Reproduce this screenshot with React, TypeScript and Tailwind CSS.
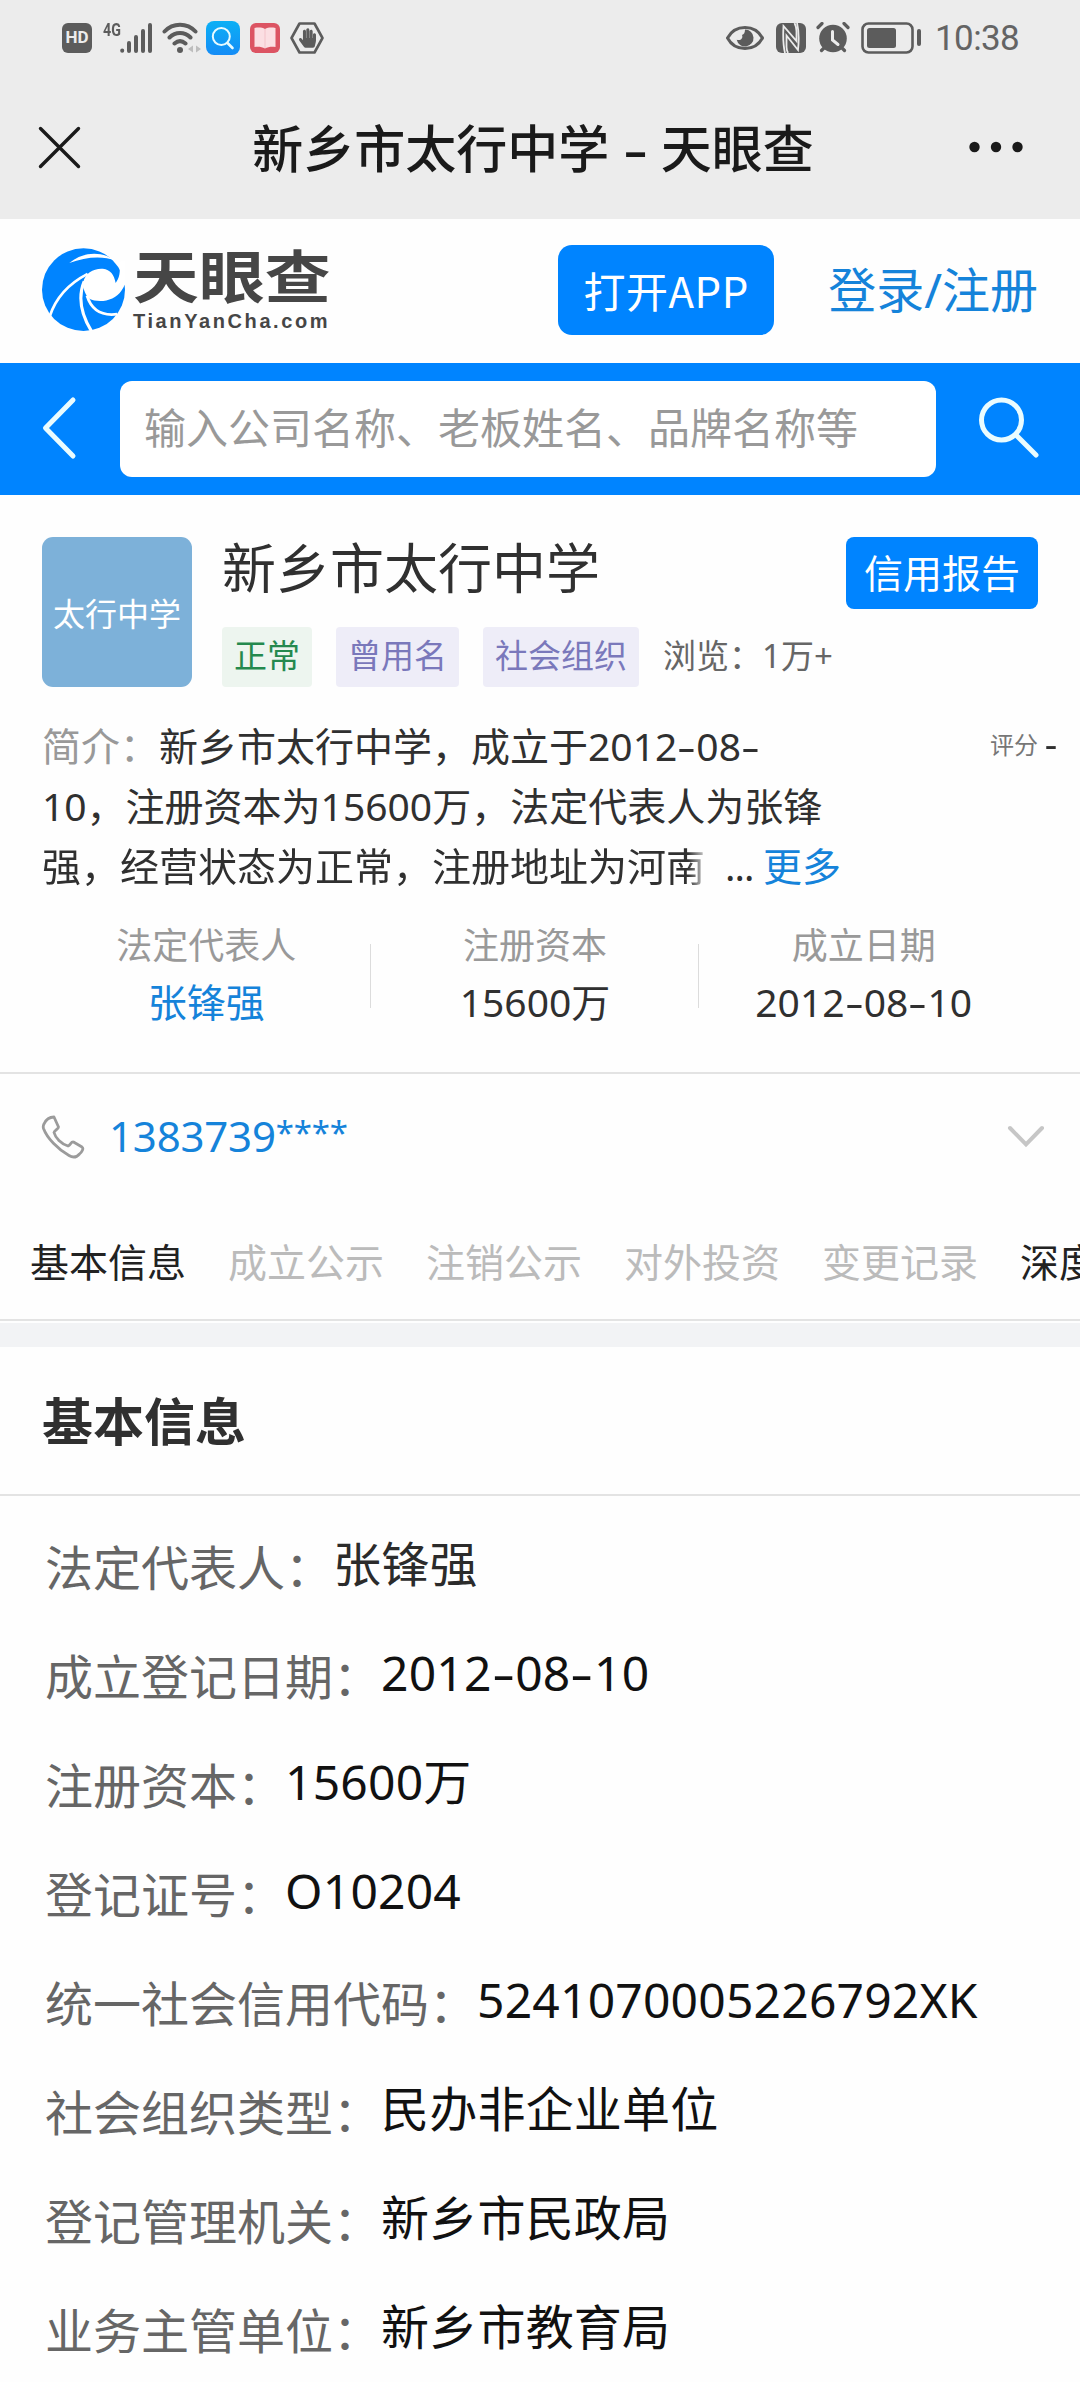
import { Fragment } from 'react'
import { FaHandPaper } from 'react-icons/fa'

const tabs = [
  { label: '基本信息', enabled: true },
  { label: '成立公示', enabled: false },
  { label: '注销公示', enabled: false },
  { label: '对外投资', enabled: false },
  { label: '变更记录', enabled: false },
  { label: '深度', enabled: true },
]

const rows = [
  { label: '法定代表人', value: '张锋强', color: 'text-[#2b2b2b]' },
  { label: '成立登记日期', value: '2012-08-10' },
  { label: '注册资本', value: '15600万' },
  { label: '登记证号', value: 'O10204' },
  { label: '统一社会信用代码', value: '5241070005226792XK' },
  { label: '社会组织类型', value: '民办非企业单位' },
  { label: '登记管理机关', value: '新乡市民政局' },
  { label: '业务主管单位', value: '新乡市教育局' },
]

// hyphens are drawn wide, the same advance as a digit minus a hair
function Dashed({ text }: { text: string }) {
  const parts = text.split('-')
  return (
    <>
      {parts.map((part, i) => (
        <Fragment key={i}>
          {i > 0 && <span className="inline-block w-[0.49em] scale-x-150 text-center">-</span>}
          {part}
        </Fragment>
      ))}
    </>
  )
}

function StatusBar() {
  return (
    <div className="flex h-[75px] items-center justify-between pr-[62px] pl-[62px] text-[#5c5c5c]">
      <div className="flex items-center">
        <div className="flex h-[30px] w-[30px] items-center justify-center rounded-[6px] bg-[#5c5c5c] font-['Roboto'] text-[17px] font-bold text-[#ececec]">
          HD
        </div>
        <span className="ml-[11px] -mt-[15px] w-[17px] origin-left scale-x-75 font-['Roboto'] text-[19px] leading-[16px] font-bold">4G</span>
        <svg className="h-[30px] w-[32px]" viewBox="0 0 32 30" stroke="currentColor" strokeWidth="4" strokeLinecap="round">
          <path d="M2.2 27.5v.3M9 20v8M16 14v14M23 8v20M30 2v26" />
        </svg>
        <svg className="ml-[10px] h-[32px] w-[40px]" viewBox="0 0 40 32" fill="none" stroke="currentColor" strokeWidth="4" strokeLinecap="round">
          <path d="M2.5 9.5C11 .5 25 .5 33.500 9.500M7.500 15.500c6-6 15-6 21 0M12.500 21.500c3.500-3 7.500-3 11 0" />
          <circle cx="18" cy="28" r="3" fill="currentColor" stroke="none" />
          <path d="M31 23.500v7l-5-3.500zM34 23.500v7l5-3.500z" fill="#bdbdbd" stroke="none" />
        </svg>
        <svg className="ml-[4px] h-[34px] w-[34px]" viewBox="0 0 34 34" fill="none">
          <defs>
            <linearGradient id="find" x1="0" y1="0" x2="0" y2="1">
              <stop offset="0" stopColor="#0bb0f5" />
              <stop offset="1" stopColor="#158cf6" />
            </linearGradient>
          </defs>
          <rect width="34" height="34" rx="8" fill="url(#find)" />
          <circle cx="15.300" cy="15.500" r="8.500" stroke="#e8fbff" strokeWidth="2" />
          <path d="M21.500 22l5 5" stroke="#e8fbff" strokeWidth="2.600" strokeLinecap="round" />
        </svg>
        <svg className="ml-[10px] h-[30px] w-[30px]" viewBox="0 0 30 30">
          <rect width="30" height="30" rx="6" fill="#dc5463" />
          <path d="M4.500 5c4-.8 7.500-.6 10.500 1 3-1.600 6.500-1.800 10.500-1v19c-4-.4-7.500-.2-10.500 1.500-3-1.700-6.500-1.900-10.500-1.500z" fill="#fbdfe3" />
          <path d="M15 6v19" stroke="#f3c3ca" strokeWidth="1" />
        </svg>
        <span className="relative ml-[10px] flex h-[32px] w-[34px] items-center justify-center">
          <svg className="absolute inset-0" viewBox="0 0 34 32" fill="none" stroke="currentColor" strokeWidth="2.600" strokeLinejoin="round">
            <path d="M9.500 1.500h15L32.500 16l-8 14.500h-15L1.500 16z" />
          </svg>
          <FaHandPaper className="h-[20px] w-[17px]" />
        </span>
      </div>

      <div className="flex items-center">
        <svg className="h-[26px] w-[38px]" viewBox="0 0 38 26" fill="none" stroke="currentColor" strokeWidth="3">
          <path d="M1.500 13C9-1 29-1 36.500 13 29 27 9 27 1.500 13z" />
          <path d="M19 4.500a8.500 8.500 0 1 1-8.300 10.200c3.500 1.500 6.800-1.200 5.300-4.700 2-.5 3-2.500 3-5.500z" fill="currentColor" stroke="none" />
        </svg>
        <svg className="ml-[12px] h-[30px] w-[30px]" viewBox="0 0 30 30" fill="none" stroke="#ececec" strokeWidth="1.800">
          <rect width="30" height="30" rx="6" fill="currentColor" stroke="none" />
          <path d="M9 30C7 22 7 12 7.500 3L20.500 18V8C20.500 4 19.500 2 18.500 0" />
          <path d="M21 0C23 8 23 18 22 27L10.500 12.500V24C10.500 26 11 28 12 30" />
        </svg>
        <svg className="ml-[10px] h-[31px] w-[34px]" viewBox="0 0 34 31" fill="none" stroke="currentColor" strokeLinecap="round">
          <circle cx="17" cy="16.500" r="13.800" fill="currentColor" stroke="none" />
          <path d="M2 5.500l4-4M32 5.500l-4-4M5.500 28.500l3-3M28.500 28.500l-3-3" strokeWidth="3.200" />
          <path d="M16.500 9.500v8.500l5.500 4.500" stroke="#ececec" strokeWidth="3" />
        </svg>
        <svg className="ml-[11px] h-[32px] w-[60px]" viewBox="0 0 60 32" fill="none" stroke="currentColor">
          <rect x="1.500" y="1.500" width="50" height="29" rx="6" strokeWidth="2.600" />
          <rect x="6" y="6" width="29" height="20" rx="2.500" fill="currentColor" stroke="none" />
          <path d="M58 9v13" strokeWidth="4" strokeLinecap="round" />
        </svg>
        <span className="ml-[14px] w-[83px] pt-[2px] font-['Roboto'] text-[35px] leading-none tracking-[-0.6px] whitespace-nowrap text-[#646464]">10:38</span>
      </div>
    </div>
  )
}

function Logo() {
  return (
    <div className="flex items-center gap-[8px]">
      <svg className="h-[83px] w-[83px]" viewBox="124 86 240 247" preserveAspectRatio="none" fill="none">
        <ellipse cx="244" cy="210" rx="120" ry="123" fill="#0084ff" />
        {/* iris opening and the gap it leaves on the right edge */}
        <path d="M243 190C248 160 275 146 300 148C322 151 332 165 337 190C342 182 349 172 349 150C349 142 348 136 345 128L380 120V190L363 196C352 222 335 236 310 242C292 246 272 243 262 238C250 226 242 208 243 190z" fill="#fff" />
        <path d="M203 131C240 98 295 92 336 124C300 108 250 112 203 131z" fill="#fff" />
        <path d="M256 163C205 190 165 230 146 290" stroke="#fff" strokeWidth="8" />
        <path d="M246 185C226 235 238 285 268 335" stroke="#fff" strokeWidth="9" />
        <path d="M254 228C265 265 290 290 342 283" stroke="#fff" strokeWidth="8" />
      </svg>
      <div className="-mt-[2px] flex w-[196px] flex-col items-start text-[#464646]">
        <span className="origin-left scale-x-[1.155] font-['Noto_Sans_CJK_SC',sans-serif] text-[57px] leading-[54px] font-bold">天眼查</span>
        <span className="mt-[11px] font-['Liberation_Sans',sans-serif] text-[20px] leading-[20px] font-bold tracking-[2.6px]">TianYanCha.com</span>
      </div>
    </div>
  )
}

function SearchBar() {
  return (
    <div className="flex h-[132px] items-center bg-[#0084ff] pb-[3px] pl-[41px]">
      <svg className="h-[64px] w-[36px]" viewBox="0 0 36 64" fill="none" stroke="#eafcff" strokeWidth="5" strokeLinecap="round" strokeLinejoin="round">
        <path d="M32 4L4.500 32L32 60" />
      </svg>
      <div className="mt-[3px] ml-[43px] flex h-[96px] w-[816px] items-center rounded-[12px] bg-white pb-[3px] pl-[24px] text-[42px] text-[#999]">
        输入公司名称、老板姓名、品牌名称等
      </div>
      <svg className="ml-[41px] h-[64px] w-[64px]" viewBox="0 0 64 64" fill="none" stroke="#eafcff" strokeWidth="5" strokeLinecap="round">
        <circle cx="24.500" cy="24" r="20" />
        <path d="M39 39L59 59" />
      </svg>
    </div>
  )
}

function Company() {
  return (
    <section className="h-[577px] px-[42px] pt-[42px]">
      <div className="flex">
        <div className="flex h-[150px] w-[150px] items-center justify-center rounded-[11px] bg-[#7db1d9] pt-[3px] text-[32px] text-white">太行中学</div>
        <div className="ml-[30px] flex flex-1 flex-col justify-between">
          <h1 className="text-[54px] leading-[62px] text-[#303030]">新乡市太行中学</h1>
          <div className="flex h-[60px] items-center gap-[24px] text-[33px] leading-[58px]">
            <span className="h-full rounded-[4px] bg-[#edf5ef] px-[12px] text-[#25894e]">正常</span>
            <span className="h-full rounded-[4px] bg-[#eeedf8] px-[12px] text-[#7a78bb]">曾用名</span>
            <span className="h-full rounded-[4px] bg-[#eeedf8] px-[12px] text-[#7a78bb]">社会组织</span>
            <span className="h-full whitespace-nowrap text-[#666]">浏览：1万+</span>
          </div>
        </div>
        <button className="h-[72px] w-[192px] rounded-[8px] bg-[#0084ff] text-[39px] leading-[70px] text-white">信用报告</button>
      </div>

      <div className="mt-[29px] flex justify-between text-[39px] leading-[60px] whitespace-nowrap text-[#303030]">
        <div>
          <div>
            <span className="text-[#999]">简介：</span>
            <Dashed text="新乡市太行中学，成立于2012-08-" />
          </div>
          <div>10，注册资本为15600万，法定代表人为张锋</div>
          <div className="flex">
            <span className="w-[664px] [mask-image:linear-gradient(to_right,#000_646px,transparent_668px)]">强，经营状态为正常，注册地址为河南</span>
            <span className="ml-[19px] w-[38px] tracking-[-1px]">...</span>
            <span className="text-[#1583da]">更多</span>
          </div>
        </div>
        <div className="-mr-[21px] flex h-[57px] items-center text-[24px] text-[#777]">
          评分<span className="ml-[10px] inline-block w-[11px] scale-x-150 font-bold text-[#303030]">-</span>
        </div>
      </div>

      <div className="mt-[20px] mr-[10px] grid grid-cols-3 text-center">
        <Stat label="法定代表人" value="张锋强" link />
        <Stat label="注册资本" value="15600万" divider />
        <Stat label="成立日期" value="2012-08-10" divider />
      </div>
    </section>
  )
}

function Stat({ label, value, link, divider }: { label: string; value: string; link?: boolean; divider?: boolean }) {
  return (
    <div className="relative h-[120px]">
      {divider && <span className="absolute top-[28px] -left-px h-[64px] w-px bg-[#dcdcdc]" />}
      <div className="text-[36px] leading-[60px] text-[#999]">{label}</div>
      <div className={`text-[39px] leading-[51px] ${link ? 'text-[#1583da]' : 'text-[#303030]'}`}>
        <Dashed text={value} />
      </div>
    </div>
  )
}

function Phone() {
  return (
    <div className="flex h-[128px] items-center border-t-2 border-[#e3e3e3] pr-[35px] pb-[1px] pl-[41px]">
      <svg className="h-[44px] w-[44px]" viewBox="0 0 44 44" fill="none" stroke="#9b9b9b" strokeWidth="2.800" strokeLinejoin="round">
        <path d="M3 9C5 4.500 9 2 13 2L17.500 12C18 13.500 13.500 15.500 13 17.500C14.500 23 20 29 27 31C29.500 30 30 26.500 32.500 27L41 32C43 33.500 41 37 38.500 39C35.500 42.500 32 43 28 40.500C17 34.500 6 23 2.500 13.500C2 12 2.200 10.500 3 9z" />
      </svg>
      <span className="-mt-[2px] ml-[24px] flex text-[42px] leading-[60px] tracking-[-0.2px] text-[#1583da]">
        1383739
        <span className="text-[33px] leading-[54px]">****</span>
      </span>
      <svg className="ml-auto h-[24px] w-[38px]" viewBox="0 0 38 24" fill="none" stroke="#c6c6c6" strokeWidth="4" strokeLinecap="round">
        <path d="M3 3L19 19.500L35 3" />
      </svg>
    </div>
  )
}

export default function App() {
  return (
    <div className="h-[2382px] w-[1080px] overflow-hidden bg-[#fefefe] font-['Noto_Sans','Noto_Sans_CJK_SC',sans-serif]">
      <div className="bg-[#ececec]">
        <StatusBar />
        <div className="flex h-[144px] items-center justify-between pr-[57px] pl-[38px] text-[#1a1a1a]">
          <svg className="h-[43px] w-[43px]" viewBox="0 0 43 43" stroke="currentColor" strokeWidth="3.400" strokeLinecap="round">
            <path d="M2.500 2.500l38 38M40.500 2.500l-38 38" />
          </svg>
          <h2 className="mt-[2px] ml-[16px] text-[51px] leading-[60px] font-medium whitespace-pre">
            <Dashed text="新乡市太行中学 - 天眼查" />
          </h2>
          <svg className="h-[12px] w-[54px]" viewBox="0 0 54 12" fill="currentColor">
            <circle cx="5.500" cy="6" r="5.200" />
            <circle cx="27" cy="6" r="5.200" />
            <circle cx="48.500" cy="6" r="5.200" />
          </svg>
        </div>
      </div>

      <header className="flex h-[144px] items-center pb-[3px] pl-[42px]">
        <Logo />
        <button className="ml-auto h-[90px] w-[216px] rounded-[14px] bg-[#0084ff] font-['Noto_Sans_CJK_SC',sans-serif] text-[42px] leading-[86px] tracking-[0.5px] text-white">打开APP</button>
        <a className="mr-[42px] ml-[54px] text-[48px] leading-[60px] whitespace-nowrap text-[#1583da]">登录/注册</a>
      </header>

      <SearchBar />
      <Company />
      <Phone />

      <nav className="flex h-[121px] gap-[42px] overflow-hidden border-b-2 border-[#e3e3e3] pl-[30px] text-[39px] leading-[124px] whitespace-nowrap">
        {tabs.map(({ label, enabled }) => (
          <span key={label} className={enabled ? 'text-[#222]' : 'text-[#bbb]'}>
            {label}
          </span>
        ))}
      </nav>
      <div className="mt-[2px] h-[24px] bg-[#f2f3f5]" />

      <h3 className="h-[149px] border-b-2 border-[#e3e3e3] pl-[42px] text-[51px] leading-[148px] font-bold text-[#303030]">基本信息</h3>

      <ul className="pt-[17px] pl-[45px] text-[48px]">
        {rows.map(({ label, value, color }) => (
          <li key={label} className="flex h-[109px] items-center whitespace-nowrap">
            <span className="text-[#666]">{label}：</span>
            <span className={`-mt-[8px] tracking-[0.2px] ${color ?? 'text-[#111]'}`}>
              <Dashed text={value} />
            </span>
          </li>
        ))}
      </ul>
    </div>
  )
}
